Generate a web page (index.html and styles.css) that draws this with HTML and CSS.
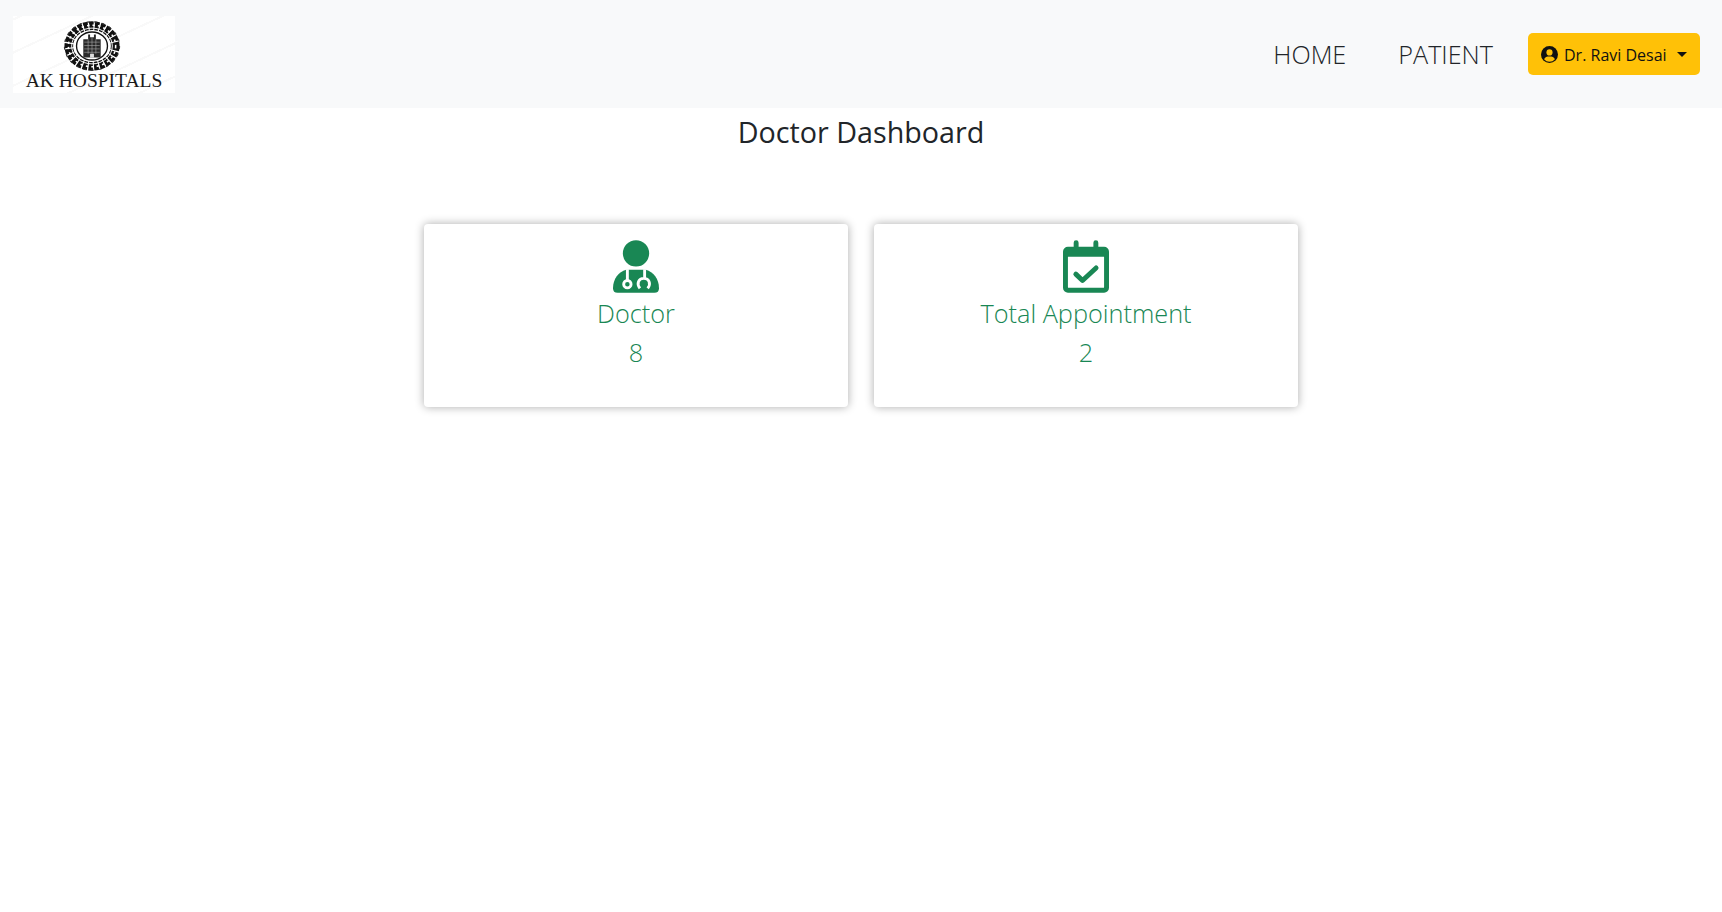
FILE: index.html
```html
<!DOCTYPE html>
<html lang="en">
<head>
<meta charset="utf-8">
<title>Doctor Dashboard</title>
<link rel="stylesheet" href="styles.css">
</head>
<body>
<nav class="navbar">
  <a class="logo" href="#">
    <svg class="emblem" viewBox="0 0 60 52" aria-hidden="true">
      <ellipse cx="30" cy="26" rx="24" ry="21" fill="none" stroke="#111" stroke-width="9" stroke-dasharray="4.500 1.200"/>
      <ellipse cx="30" cy="26" rx="24.500" ry="21.500" fill="none" stroke="#fff" stroke-width="1.600" stroke-dasharray="2.500 3.200"/>
      <ellipse cx="30" cy="26" rx="21" ry="18.500" fill="none" stroke="#fff" stroke-width="1"/>
      <ellipse cx="30" cy="26" rx="28.500" ry="25" fill="none" stroke="#333" stroke-width="1.200" stroke-dasharray="3 5"/>
      <ellipse cx="30" cy="26" rx="16" ry="14.500" fill="#fff" stroke="#111" stroke-width="1.400"/>
      <path d="M21 38V19h5v-5h2v3h4v-3h2v5h5v19z" fill="#2a2a2a"/>
      <path d="M22 22h16M22 25.500h16M22 29h16M22 32.500h16M26 19v15M30 17v17M34 19v15" stroke="#aaa" stroke-width=".6" fill="none"/>
      <rect x="28" y="34" width="4" height="4" fill="#ddd"/>
    </svg>
    <span class="logo-text">AK HOSPITALS</span>
  </a>
  <div class="nav-links">
    <a class="nav-link" href="#">HOME</a>
    <a class="nav-link" href="#">PATIENT</a>
    <button class="user-btn" type="button">
      <svg class="user-icon" viewBox="0 0 16 16" aria-hidden="true">
        <circle cx="8" cy="8" r="8" fill="#111"/>
        <circle cx="8" cy="6" r="2.900" fill="#ffc107"/>
        <path d="M2.900 12.400C3.700 10.300 5.400 9.800 8 9.800s4.300.5 5.100 2.600A6.700 6.700 0 0 1 8 14.800a6.700 6.700 0 0 1-5.100-2.400z" fill="#ffc107"/>
      </svg>
      <span class="user-name">Dr. Ravi Desai</span>
      <span class="caret"></span>
    </button>
  </div>
</nav>
<main class="content">
  <h1 class="title">Doctor Dashboard</h1>
  <section class="cards">
    <article class="card">
      <svg class="card-icon" viewBox="0 0 448 512" aria-hidden="true">
        <circle cx="224" cy="128" r="128" fill="currentColor"/>
        <path d="M0 467C0 380 55 306 128 288H320C393 306 448 380 448 467Q448 512 403 512H45Q0 512 0 467Z" fill="currentColor"/>
        <path d="M140 282V396M308 282V372M262 468C226 420 250 372 300 372C350 372 374 420 338 468" fill="none" stroke="#fff" stroke-width="28"/>
        <circle cx="140" cy="428" r="36" fill="none" stroke="#fff" stroke-width="28"/>
      </svg>
      <div class="card-label">Doctor</div>
      <div class="card-value">8</div>
    </article>
    <article class="card">
      <svg class="card-icon" viewBox="0 0 448 512" aria-hidden="true">
        <path fill-rule="evenodd" d="M48 64H104V24a24 24 0 0 1 48 0V64H296V24a24 24 0 0 1 48 0V64H400a48 48 0 0 1 48 48V464a48 48 0 0 1-48 48H48a48 48 0 0 1-48-48V112a48 48 0 0 1 48-48ZM48 160V458a6 6 0 0 0 6 6H394a6 6 0 0 0 6-6V160Z" fill="currentColor"/>
        <path d="M125 330L190 392L322 270" fill="none" stroke="currentColor" stroke-width="48" stroke-linecap="round" stroke-linejoin="round"/>
      </svg>
      <div class="card-label">Total Appointment</div>
      <div class="card-value">2</div>
    </article>
  </section>
</main>
</body>
</html>
```
FILE: styles.css
```css
* { box-sizing: border-box; }
html, body { margin: 0; padding: 0; }
body {
  background: #fff;
  color: #212529;
  font-family: "Open Sans", "Noto Sans", sans-serif;
  min-height: 912px;
}
.navbar {
  height: 108px;
  background: #f8f9fa;
  display: flex;
  align-items: center;
  justify-content: space-between;
  padding: 0 22px 0 13px;
}
.logo {
  width: 162px;
  height: 77px;
  background-color: #fff;
  background-image: repeating-linear-gradient(-25deg, transparent 0 14px, #f9f9f9 14px 16px, transparent 16px 30px);
  display: flex;
  flex-direction: column;
  align-items: center;
  text-decoration: none;
  color: #1a1a1a;
  padding-top: 4px;
}
.emblem { width: 58px; height: 52px; margin-right: 5px; flex: none; }
.logo-text {
  font-family: "Liberation Serif", serif;
  font-size: 19.500px;
  line-height: 18px;
  white-space: nowrap;
}
.nav-links { display: flex; align-items: center; }
.nav-link {
  color: #212529;
  text-decoration: none;
  font-size: 25.200px;
  font-weight: 300;
  margin-right: 52px;
  line-height: 32px;
}
.nav-link:nth-child(2) { margin-right: 35px; }
.user-btn {
  width: 172px;
  height: 42px;
  background: #ffc107;
  border: 0;
  border-radius: 5px;
  color: #111;
  font-family: inherit;
  font-size: 16px;
  display: flex;
  align-items: center;
  padding: 0 13px;
}
.user-name { line-height: 24px; padding-top: 2px; }
.user-icon { width: 17px; height: 17px; margin-right: 6px; flex: none; }
.caret {
  margin-left: 10px;
  border-top: 5px solid #111;
  border-left: 5px solid transparent;
  border-right: 5px solid transparent;
}
.content { display: flex; flex-direction: column; align-items: center; }
.title {
  margin: 4px 0 0;
  font-size: 28.700px;
  font-weight: 400;
  line-height: 40px;
}
.cards { display: flex; gap: 26px; margin-top: 72px; }
.card {
  width: 424px;
  height: 183px;
  background: #fff;
  border-radius: 4px;
  box-shadow: 0 0 10px rgba(0, 0, 0, .33);
  color: #198754;
  display: flex;
  flex-direction: column;
  align-items: center;
  padding-top: 16px;
}
.card-icon { width: 46px; height: 53px; flex: none; display: block; }
.card-label {
  font-size: 25.300px;
  font-weight: 300;
  line-height: 38px;
  margin-top: 1px;
}
.card-value {
  font-size: 25.300px;
  font-weight: 300;
  line-height: 38px;
  margin-top: 1px;
}
```
